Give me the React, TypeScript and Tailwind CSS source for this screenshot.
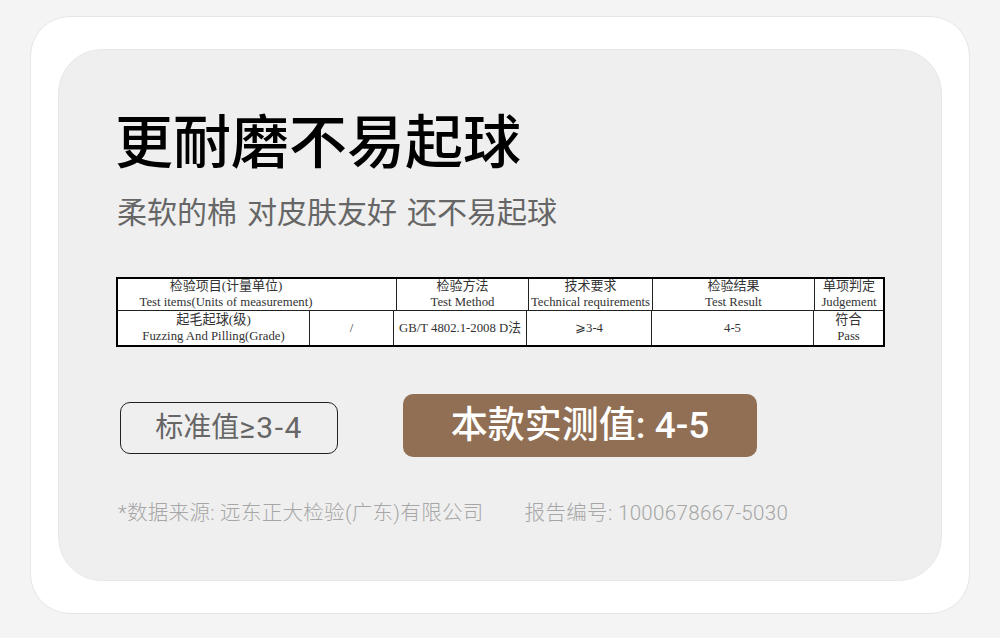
import React from 'react';

const sans = "font-['Roboto','Noto_Sans_CJK_SC',sans-serif]";
const cell = "flex flex-col items-center border-r border-[#222222] last:border-r-0 text-[#333333] font-['Liberation_Serif','Noto_Sans_CJK_SC',serif]";

const topRow = [
  { zh: '检验项目(计量单位)', en: 'Test items(Units of measurement)', w: 'w-[279px]', pad: 'pr-[62px]' },
  { zh: '检验方法', en: 'Test Method', w: 'w-[132px]', pad: '' },
  { zh: '技术要求', en: 'Technical requirements', w: 'w-[124px]', pad: '' },
  { zh: '检验结果', en: 'Test Result', w: 'w-[162px]', pad: '' },
  { zh: '单项判定', en: 'Judgement', w: 'w-[68px]', pad: '' },
];

const App = () => {
  return (
    <div className={`h-[638px] w-[1000px] overflow-hidden bg-[#f4f4f4] pt-[16px] pl-[30px] ${sans}`}>
      <div className="h-[598px] w-[940px] rounded-[40px] border border-[#e6e6e6] bg-white pt-[32px] pl-[27px]">
        <div className="h-[532px] w-[884px] rounded-[44px] border border-[#e8e8e8] bg-[#efefef] pl-[57px] pt-[55px]">
          <h1 className="-ml-px text-[58px] leading-[76px] font-medium text-black">更耐磨不易起球</h1>
          <p className="mt-[12px] ml-px text-[30px] leading-[40px] text-[#666666] [word-spacing:2.6px]">柔软的棉 对皮肤友好 还不易起球</p>

          {/* Test report table */}
          <div className="mt-[44px] h-[70px] w-[769px] border-2 border-black bg-white text-[12.75px]">
            <div className="flex h-[32px] border-b border-[#222222]">
              {topRow.map((c) => (
                <div key={c.en} className={`${cell} ${c.w} ${c.pad}`}>
                  <span className="mt-px text-[13px] leading-[12px]">{c.zh}</span>
                  <span className="mt-[2px] leading-[16px] whitespace-nowrap">{c.en}</span>
                </div>
              ))}
            </div>
            <div className="flex h-[34px] leading-[16px]">
              <div className={`${cell} w-[192px] justify-center`}>
                <span className="text-[13.2px]">起毛起球(级)</span>
                <span className="whitespace-nowrap">Fuzzing And Pilling(Grade)</span>
              </div>
              <div className={`${cell} w-[84px] justify-center`}>/</div>
              <div className={`${cell} w-[133px] justify-center whitespace-nowrap`}>GB/T 4802.1-2008 D法</div>
              <div className={`${cell} w-[125px] justify-center`}>⩾3-4</div>
              <div className={`${cell} w-[162px] justify-center`}>4-5</div>
              <div className={`${cell} w-[69px] justify-center`}>
                <span className="text-[13.2px]">符合</span>
                <span>Pass</span>
              </div>
            </div>
          </div>

          <div className="mt-[47px] flex items-center">
            <div className="mt-[4px] ml-[4px] flex h-[52px] w-[218px] items-center justify-center rounded-[10px] border border-[#222222] text-[28px] text-[#666666]">
              标准值<span className="text-[30px] tracking-[1.5px]">≥3-4</span>
            </div>
            <div className="ml-[65px] flex h-[63px] w-[354px] items-center justify-center rounded-[10px] bg-[#906f54] text-[37px] font-medium text-white">
              本款实测值: 4-5
            </div>
          </div>

          <div className="mt-[42px] ml-[2px] flex text-[20.5px] leading-[28px] font-light text-[#a6a6a6]">
            <span className="tracking-[0.3px]">*数据来源: 远东正大检验(广东)有限公司</span>
            <span className="ml-[41px] tracking-[0.35px]">报告编号: 1000678667-5030</span>
          </div>
        </div>
      </div>
    </div>
  );
};

export default App;
